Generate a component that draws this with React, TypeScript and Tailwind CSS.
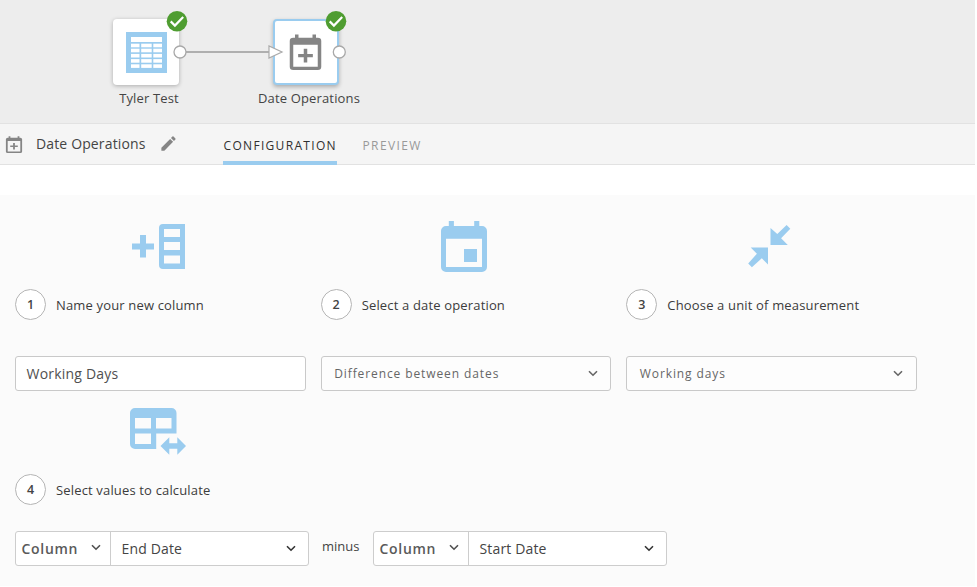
import type { ReactNode } from "react";

const BLUE = "#9accef";

function CheckBadge() {
  return (
    <svg className="absolute -top-[9px] left-[53px] z-10" width="22" height="22" viewBox="0 0 22 22">
      <circle cx="11" cy="11.300" r="10.300" fill="#4f9d31" />
      <path d="M4.700 11.400 8.900 15.600 17.200 7" fill="none" stroke="#fff" strokeWidth="2.200" />
    </svg>
  );
}

function CalendarPlus({ className }: { className: string }) {
  return (
    <svg className={className} viewBox="2 0 20 22" preserveAspectRatio="none" fill="#858585">
      <path d="M19 2.3h-1V.3h-2v2H8v-2H6v2H5a2 2 0 0 0-2 2V20a2 2 0 0 0 2 2h14a2 2 0 0 0 2-2V4.300a2 2 0 0 0-2-2zM19 20H5V6.500h14z" />
      <path d="M11 9h2v3.200h3.200v2H13v3.200h-2v-3.200H7.800v-2H11z" />
    </svg>
  );
}

function TableGlyph() {
  return (
    <svg className="block" width="41" height="41" viewBox="0 0 41 41">
      <path fill={BLUE} d="M0 0h41v41H0z" />
      <path fill="#fff" d="M5 5h31v5H5z" />
      {[11.7, 16.7, 21.9, 27.1, 32.3].map((y) => (
        <g key={y} fill="#fff">
          <rect x="5" y={y} width="8.500" height="3.600" />
          <rect x="15.200" y={y} width="10.500" height="3.600" />
          <rect x="27.300" y={y} width="8.700" height="3.600" />
        </g>
      ))}
    </svg>
  );
}

function Chevron({ className, color }: { className: string; color: string }) {
  return (
    <svg className={className} width="10" height="7" viewBox="0 0 10 7">
      <path d="M1 1.200 5 5.200 9 1.200" fill="none" stroke={color} strokeWidth="1.600" />
    </svg>
  );
}

function Step({ n, title, icon, children }: { n: number; title: string; icon: ReactNode; children: ReactNode }) {
  return (
    <div className="flex flex-col">
      <div className="h-[70px]">{icon}</div>
      <div className="flex h-[31px] items-center">
        <span className="flex size-[31px] items-center justify-center rounded-full border border-[#b5b5b5] bg-white pt-[2px] text-[12.5px] font-semibold text-[#444]">
          {n}
        </span>
        <span className="ml-[10px] whitespace-nowrap pt-[2px] text-[13px] tracking-[0.16px] text-[#3c3c3c]">{title}</span>
      </div>
      {children}
    </div>
  );
}

function Select({ label }: { label: string }) {
  return (
    <div className="mt-[36px] flex h-[35px] items-center justify-between rounded-[3px] border border-[#c9c9c9] bg-[#fdfdfd] pl-[12.500px] pr-[12.500px]">
      <span className="pt-px text-[12px] font-medium tracking-[0.9px] text-[#666]">{label}</span>
      <Chevron className="" color="#666" />
    </div>
  );
}

function Operand({ label }: { label: string }) {
  return (
    <div className="flex h-[35px] w-[293.500px] rounded-[3px] border border-[#cdcdcd] bg-white">
      <div className="flex w-[95px] items-center justify-between border-r border-[#cdcdcd] pl-[5.500px] pr-[9px]">
        <span className="text-[14px] font-semibold tracking-[0.7px] text-[#5a5a5a]">Column</span>
        <Chevron className="-mt-[2px]" color="#505050" />
      </div>
      <div className="flex flex-1 items-center justify-between pl-[10.500px] pr-[12px]">
        <span className="text-[14px] tracking-[0.15px] text-[#444]">{label}</span>
        <Chevron className="" color="#333" />
      </div>
    </div>
  );
}

const addColumnIcon = (
  <svg className="ml-[115px]" width="60" height="60" viewBox="130 219 60 60" fill={BLUE}>
    <path d="M140 235h6v8.500h8v6h-8v8h-6v-8h-8v-6h8z" />
    <path fillRule="evenodd" d="M163 224h22v45h-22a4 4 0 0 1-4-4v-37a4 4 0 0 1 4-4zM164 229v8h16v-8zM164 242v8h16v-8zM164 255.500v8h16v-8z" />
  </svg>
);

const eventIcon = (
  <svg className="ml-[115px]" width="60" height="60" viewBox="436 219 60 60" fill={BLUE}>
    <path fillRule="evenodd" d="M448.800 221h5.100v5.100h20.300V221h5.100v5.100h2.700a5 5 0 0 1 5 5V267a5 5 0 0 1-5 5h-36a5 5 0 0 1-5-5v-35.900a5 5 0 0 1 5-5h2.800zM446 238.800V267h36v-28.200z" />
    <path d="M464 249h13v13h-13z" />
  </svg>
);

const shrinkIcon = (
  <svg className="ml-[115px]" width="60" height="60" viewBox="741 219 60 60" fill={BLUE}>
    <path d="M770.500 228v17h17.300l-6.700-6.700 9.200-9.600-3.700-3.700-9.300 9.100z" />
    <path d="M768 247.500h-17.300l6.200 6.200-8.700 9.900 3.700 3.700 9.900-9 6.200 6.200z" />
  </svg>
);

const tableArrowsIcon = (
  <svg className="ml-[110px]" width="70" height="60" viewBox="125 404 70 60" fill={BLUE}>
    <path fillRule="evenodd" d="M135 408h36.500a5 5 0 0 1 5 5v20.500h-20.300V449H135a5 5 0 0 1-5-5v-31a5 5 0 0 1 5-5zM135 418v10.500h16V418zM156 418v10.500h15.500V418zM135 433.500V444h16v-10.500z" />
    <path d="M160.500 446l8.800-8.800v6h8V437.200l8.700 8.800-8.700 8.700v-5.900h-8v5.900z" />
  </svg>
);

export default function App() {
  return (
    <div className="flex h-[587px] w-[977px] flex-col overflow-hidden bg-white font-['Open_Sans','Noto_Sans',sans-serif]">
      <div className="relative h-[123px] w-[975px] bg-[#ededed]">
        <svg className="absolute left-[170px] top-[38px] z-10" width="180" height="28" viewBox="170 38 180 28">
          <path d="M185 52h84" stroke="#9a9a9a" strokeWidth="1.700" />
          <path d="M269 46v12l13-6z" fill="#fff" stroke="#aaa" strokeWidth="1.200" />
          <circle cx="180" cy="52" r="6" fill="#fff" stroke="#a8a8a8" strokeWidth="1.300" />
          <circle cx="339.300" cy="52" r="6" fill="#fff" stroke="#a8a8a8" strokeWidth="1.300" />
        </svg>
        <div className="absolute left-[113px] top-[19px] size-[66px] rounded-[4px] bg-white pl-[13px] pt-[13px] shadow-[0_1px_4px_rgba(0,0,0,0.28)]">
          <TableGlyph />
          <CheckBadge />
        </div>
        <div className="absolute left-[273px] top-[19px] size-[66px] rounded-[4px] border-2 border-[#9accef] bg-white shadow-[0_2px_4px_rgba(0,0,0,0.28)]">
          <CalendarPlus className="ml-[13px] mt-[13px] h-[36px] w-[35px]" />
          <div className="absolute -left-[3px] -top-[2px]">
            <CheckBadge />
          </div>
        </div>
        <div className="absolute left-[89px] top-[88px] w-[120px] text-center text-[13px] leading-[20px] tracking-[0.15px] text-[#444]">Tyler Test</div>
        <div className="absolute left-[249px] top-[88px] w-[120px] text-center text-[13px] leading-[20px] tracking-[0.15px] text-[#444]">Date Operations</div>
      </div>

      <header className="flex h-[42px] w-[975px] border-y border-[#e2e2e2] bg-[#f5f5f5]">
        <CalendarPlus className="ml-[5px] mt-[12px] h-[17px] w-[18px]" />
        <span className="ml-[13px] w-[111px] whitespace-nowrap text-[14px] leading-[40px] tracking-[0.14px] text-[#444]">Date Operations</span>
        <svg className="ml-[12px] mt-[10px]" width="19" height="19" viewBox="0 0 24 24" fill="#858585">
          <path d="M3 17.250V21h3.750L17.810 9.940l-3.750-3.750zM20.710 7.040a1 1 0 0 0 0-1.410l-2.340-2.340a1 1 0 0 0-1.410 0l-1.830 1.830 3.750 3.750z" />
        </svg>
        <nav className="ml-[45px] flex text-[12px] leading-[44px] tracking-[1.4px]">
          <span className="h-[41px] w-[114px] whitespace-nowrap border-b-4 border-[#9accef] pl-[0.500px] font-medium tracking-[1.320px] text-[#303030]">CONFIGURATION</span>
          <span className="ml-[25.500px] text-[#999]">PREVIEW</span>
        </nav>
      </header>

      <main className="mt-[30px] h-[391px] w-[975px] bg-[#fbfbfb] pl-[15px] pt-[24px]">
        <div className="grid w-[902px] grid-cols-3 gap-x-[15px]">
          <Step n={1} title="Name your new column" icon={addColumnIcon}>
            <div className="mt-[36px] flex h-[35px] items-center rounded-[3px] border border-[#c9c9c9] bg-white pl-[10.500px] text-[14px] tracking-[0.200px] text-[#505050]">
              Working Days
            </div>
          </Step>
          <Step n={2} title="Select a date operation" icon={eventIcon}>
            <Select label="Difference between dates" />
          </Step>
          <Step n={3} title="Choose a unit of measurement" icon={shrinkIcon}>
            <Select label="Working days" />
          </Step>
        </div>
        <div className="mt-[13px]">
          <Step n={4} title="Select values to calculate" icon={tableArrowsIcon}>
            <div className="mt-[26px] flex">
              <Operand label="End Date" />
              <span className="ml-[13.500px] w-[51px] text-[13px] leading-[31px] text-[#444]">minus</span>
              <Operand label="Start Date" />
            </div>
          </Step>
        </div>
      </main>
    </div>
  );
}
